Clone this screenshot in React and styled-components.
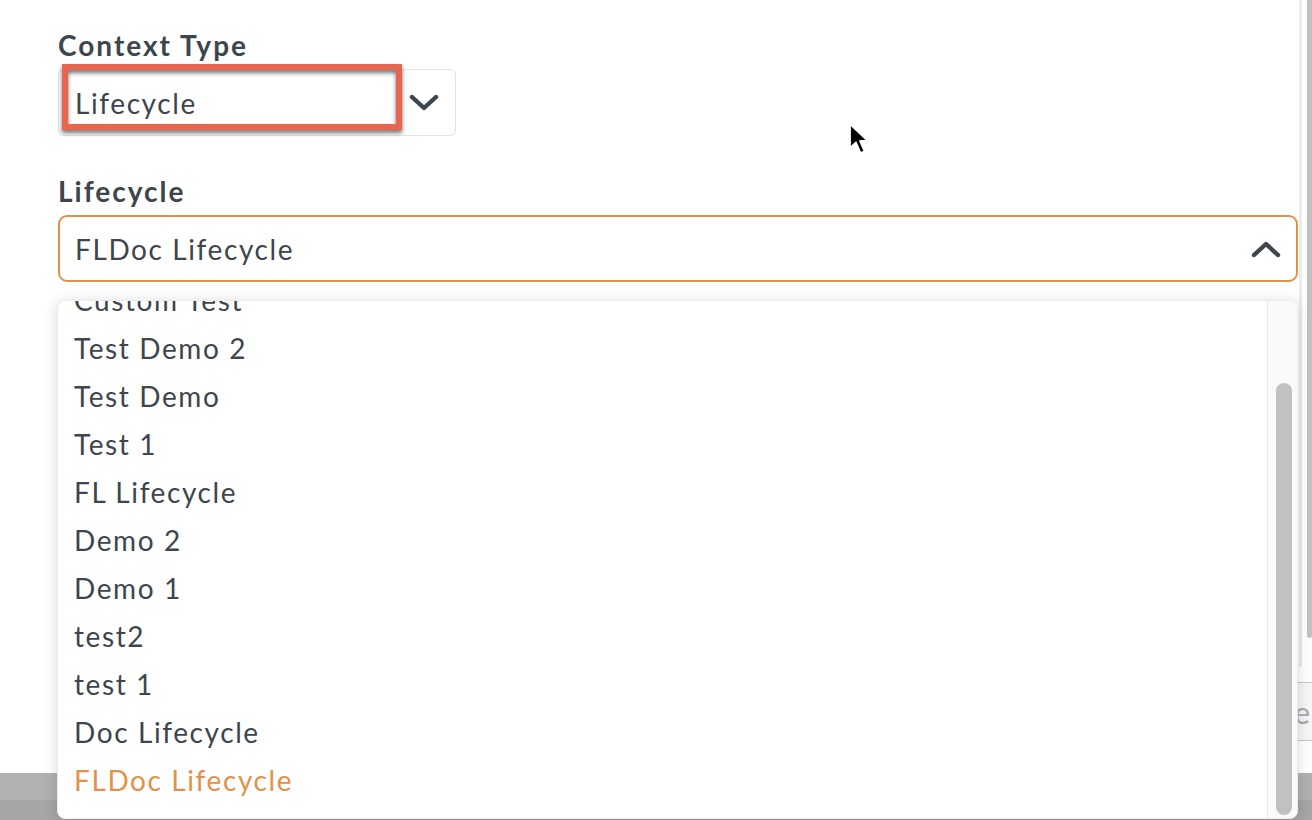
import React from 'react'
import styled, {createGlobalStyle} from 'styled-components'

const GlobalStyle = createGlobalStyle`
  html, body {
    margin: 0;
    padding: 0;
    background: #ffffff;
    overflow: hidden;
  }
  body {
    font-family: Lato, "Open Sans", sans-serif;
    color: #3d454d;
  }
`

const lifecycles = [
  'Custom Test',
  'Test Demo 2',
  'Test Demo',
  'Test 1',
  'FL Lifecycle',
  'Demo 2',
  'Demo 1',
  'test2',
  'test 1',
  'Doc Lifecycle',
  'FLDoc Lifecycle',
]

const Chevron = ({up}) => (
  <svg width="30" height="18" viewBox="0 0 30 18">
    <path
      d={up ? 'M3 15 L15 4 L27 15' : 'M3 3 L15 14 L27 3'}
      fill="none"
      stroke="#3d454d"
      strokeWidth="4.4"
      strokeLinecap="round"
      strokeLinejoin="round"
    />
  </svg>
)

const Cursor = () => (
  <svg width="24" height="34" viewBox="0 0 24 34">
    <path
      d="M2 2 L2 26 L8 20.5 L12.5 31 L16.5 29.2 L12 19 L20 19 Z"
      fill="#000"
      stroke="#fff"
      strokeWidth="1.8"
      strokeLinejoin="round"
    />
  </svg>
)

const App = () => {
  const selected = 'FLDoc Lifecycle'
  return (
    <>
      <GlobalStyle />
      <Screen>
        <Pane>
          <Content>
            <Label>Context Type</Label>
            <SmallSelect>
              <SelectValue>Lifecycle</SelectValue>
              <Chevron />
            </SmallSelect>
            <Label spaced>Lifecycle</Label>
            <WideSelect>
              <SelectValue>FLDoc Lifecycle</SelectValue>
              <Chevron up />
            </WideSelect>
          </Content>
          <PageScroll>
            <PageThumb />
          </PageScroll>
        </Pane>
        <Footer>
          <FooterInput>Save</FooterInput>
        </Footer>
        <GrayBand />

        <Annotation />
        <MouseCursor>
          <Cursor />
        </MouseCursor>

        <Menu>
          <MenuList>
            {lifecycles.map((name) => (
              <MenuItem key={name} active={name === selected}>{name}</MenuItem>
            ))}
          </MenuList>
          <MenuScroll>
            <MenuThumb />
          </MenuScroll>
        </Menu>
      </Screen>
    </>
  )
}

export default App

const Screen = styled.div`
  position: relative;
  width: 1312px;
  height: 820px;
  display: flex;
  flex-direction: column;
  overflow: hidden;
  background: #fff;
`

const Pane = styled.div`
  height: 667px;
  display: flex;
`

const Content = styled.div`
  flex: 1;
  padding: 28px 1px 0 58px;
  display: flex;
  flex-direction: column;
  align-items: flex-start;
`

const Label = styled.div`
  font-weight: 700;
  font-size: 28px;
  letter-spacing: 2px;
  line-height: 34px;
  color: #3d454d;
  margin-top: ${(p) => (p.spaced ? '38px' : '0')};
  margin-bottom: 7px;
`

const SelectBase = styled.div`
  box-sizing: border-box;
  height: 67px;
  display: flex;
  align-items: center;
  justify-content: space-between;
  background: #fff;
`

const SmallSelect = styled(SelectBase)`
  width: 398px;
  border: 1px solid #e2e2e2;
  border-radius: 6px;
  padding: 0 16px 0 16px;
`

const WideSelect = styled(SelectBase)`
  width: 100%;
  border: 2px solid #e0924a;
  border-radius: 9px;
  padding: 0 15px 0 15px;
`

const SelectValue = styled.span`
  font-size: 28px;
  letter-spacing: 1.6px;
  color: #3d454d;
`

const PageScroll = styled.div`
  width: 13px;
  box-sizing: border-box;
  border-left: 3px solid #ebebeb;
  padding-left: 5px;
`

const PageThumb = styled.div`
  height: 638px;
  background: #c1c1c1;
  border-radius: 0 0 4px 4px;
`

const Footer = styled.div`
  height: 106px;
  display: flex;
  justify-content: flex-end;
  align-items: flex-start;
  padding-top: 15px;
  box-sizing: border-box;
`

const FooterInput = styled.div`
  box-sizing: border-box;
  width: 220px;
  height: 59px;
  margin-right: -8px;
  border-top: 1px solid #c8c8c8;
  border-bottom: 1px solid #c8c8c8;
  background: #f6f6f6;
  font-size: 30px;
  color: #a9a9a9;
  display: flex;
  align-items: center;
  justify-content: flex-end;
  padding-right: 10px;
`

const GrayBand = styled.div`
  flex: 1;
  background: linear-gradient(#b1b1b1 0, #b1b1b1 27px, #a6a6a6 27px);
`

const Annotation = styled.div`
  position: absolute;
  left: 62px;
  top: 64px;
  width: 340px;
  height: 66px;
  box-sizing: border-box;
  border: 6px solid #e8654f;
  filter: drop-shadow(0 3px 2px rgba(0, 0, 0, 0.55));
`

const MouseCursor = styled.div`
  position: absolute;
  left: 848px;
  top: 122px;
`

const Menu = styled.div`
  position: absolute;
  left: 57px;
  top: 300px;
  width: 1241px;
  height: 519px;
  box-sizing: border-box;
  background: #fff;
  border: 1px solid #ececec;
  border-radius: 8px;
  box-shadow: 0 2px 14px rgba(0, 0, 0, 0.16);
  display: flex;
  overflow: hidden;
`

const MenuList = styled.div`
  flex: 1;
  margin-top: -25px;
`

const MenuItem = styled.div`
  height: 48px;
  line-height: 48px;
  padding-left: 16px;
  font-size: 28px;
  letter-spacing: 1.6px;
  color: ${(p) => (p.active ? '#e0924a' : '#3d454d')};
`

const MenuScroll = styled.div`
  width: 30px;
  box-sizing: border-box;
  border-left: 1px solid #e6e6e6;
  background: #fafafa;
  padding: 82px 5px 3px 8px;
  display: flex;
`

const MenuThumb = styled.div`
  flex: 1;
  background: #c1c1c1;
  border-radius: 8px;
`
